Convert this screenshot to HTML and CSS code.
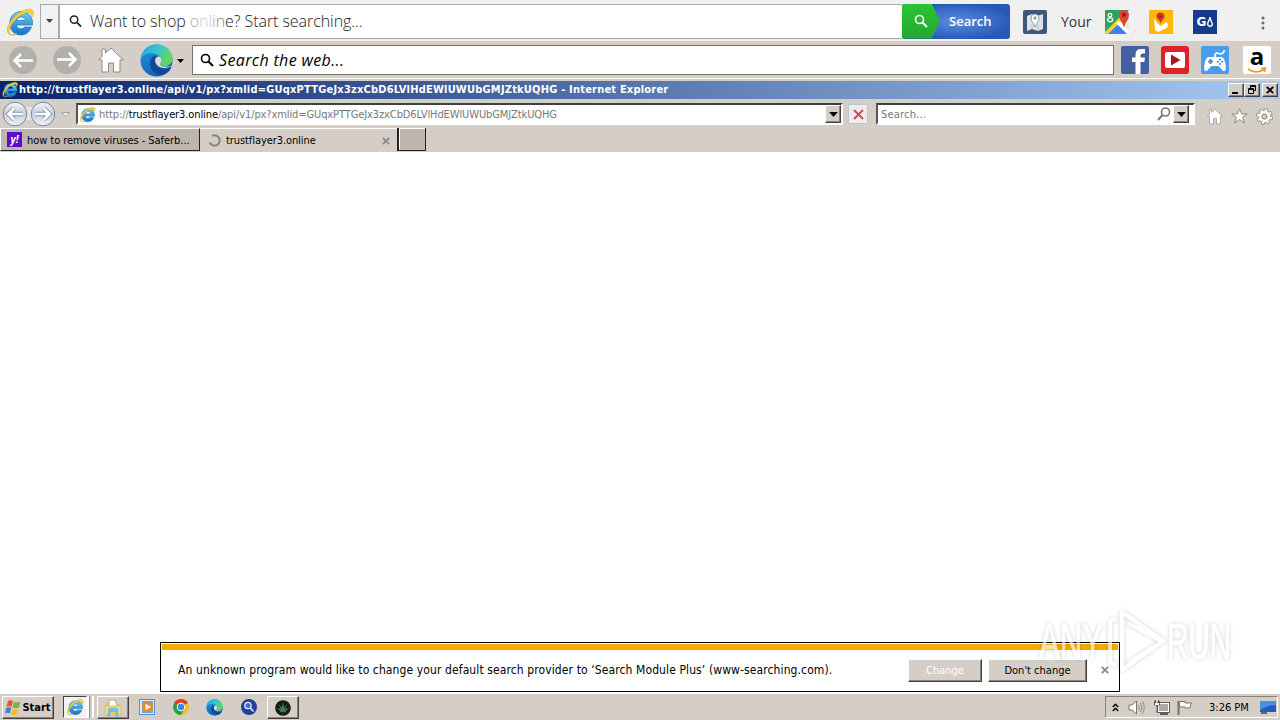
FILE: index.html
```html
<!DOCTYPE html>
<html lang="en">
<head>
<meta charset="utf-8">
<title>Internet Explorer</title>
<link rel="stylesheet" href="styles.css">
</head>
<body>
<svg class="defs" width="0" height="0">
  <defs>
    <linearGradient id="ieg" x1="0" y1="0" x2="0" y2="1"><stop offset="0" stop-color="#6ccdf5"/><stop offset="1" stop-color="#1470c4"/></linearGradient>
    <linearGradient id="edgetop" x1="0" y1="0" x2="1" y2=".5"><stop offset="0" stop-color="#1a9fe0"/><stop offset=".5" stop-color="#35c6d0"/><stop offset="1" stop-color="#62d660"/></linearGradient>
    <linearGradient id="edgelow" x1="0" y1="0" x2=".4" y2="1"><stop offset="0" stop-color="#1f9be6"/><stop offset="1" stop-color="#1462b4"/></linearGradient>
    <symbol id="ie" viewBox="0 0 30 30">
      <path d="M27.500 18H11.500C12 22 17 23 19.500 20H26.500C24.500 25.500 20.500 28 15.800 28 8.500 28 4.800 22.500 4.800 16 4.800 9.500 9.500 4.500 16 4.500 23.500 4.500 28.200 10 27.500 18ZM11.500 13.500H20.500C20 8.700 12.500 8.700 11.500 13.500Z" fill="url(#ieg)" stroke="#1b7dc5" stroke-width=".7"/>
      <path d="M4 27C-1 24 5 12 14 6 20 2 26 1 28 4 29 6 28 8 27 10 27 5 23 4 16 8 8 13 2 23 5 27 7 29 10 27 12 26 9 29 6 29 4 27Z" fill="#f6cf3c" stroke="#c8a02c" stroke-width=".5"/>
    </symbol>
    <symbol id="edge" viewBox="0 0 32 32">
      <circle cx="16" cy="16" r="15.500" fill="url(#edgelow)"/>
      <path d="M10 17C8 25 15 31 23 29.800 27 28 29 26 30.300 22.500 25 26 16 24 14.500 18 13.500 14 16 12 17 11.500 13 11 10.500 13.500 10 17Z" fill="#0f4a9a"/>
      <path d="M.6 14.500C2 6 8 .5 16 .5 25 .5 31.500 7 31.500 14 31.500 18.500 28 21.300 23.500 21.300 19.500 21.300 18.800 20 20 18.500 22.500 14.500 18.500 9 11.500 9 6.500 9 2.500 11 .6 14.500Z" fill="url(#edgetop)"/>
      <path d="M19.500 12.500C16 11 13.500 15.500 15.500 19 18 24 26 24.500 31 20.500 29 21.800 25 22 22 21.500 18.800 21 19 19.500 20 18.500 21.300 16.500 21 14 19.500 12.500Z" fill="#dedcd6"/>
    </symbol>
    <symbol id="mag" viewBox="0 0 14 14"><circle cx="5.500" cy="5.500" r="4" fill="none" stroke="currentColor" stroke-width="1.600"/><path d="M8.500 8.500L13 13" stroke="currentColor" stroke-width="2"/></symbol>
    <symbol id="house" viewBox="0 0 26 26"><path d="M13 1L7.500 6V2H4V9.500L.7 13H4V25H10.500V16H15.500V25H22V13H25.300Z" fill="#fff" stroke="#8d8983" stroke-width="1"/></symbol>
    <symbol id="dn" viewBox="0 0 7 4"><path d="M0 0H7L3.500 4Z" fill="currentColor"/></symbol>
    <symbol id="x" viewBox="0 0 8 8"><path d="M.8.8L7.200 7.200M7.200.8L.8 7.200" stroke="currentColor" stroke-width="1.900"/></symbol>
  </defs>
</svg>
<div class="desktop">
  <header class="bar shop">
    <svg class="shop-ie" width="30" height="30"><use href="#ie"/></svg>
    <button class="shop-drop"><svg width="7" height="6"><use href="#dn"/></svg></button>
    <div class="shop-input"><svg width="13" height="14"><use href="#mag"/></svg><span>Want to shop <i class="fade1">o</i><i class="fade2">nl</i><i class="fade1">i</i><i class="fade3">n</i>e? Start searching...</span></div>
    <button class="shop-btn"><span class="shop-arrow"><svg width="14" height="14"><use href="#mag"/></svg></span><span>Search</span></button>
    <svg class="ic-map" width="24" height="24" viewBox="0 0 24 24"><rect width="24" height="24" rx="2" fill="#3e5877"/><path d="M4 6L9 4 14 6 20 4V19L15 21 9 19 4 21Z" fill="#dfe3e6"/><path d="M9 14V19M15 14V21" stroke="#b5bec8"/><path d="M12 17C10 12 8 11 8 8A4 4 0 0 1 16 8C16 11 14 12 12 17Z" fill="#fff" stroke="#72889c" stroke-width=".8"/><circle cx="12" cy="8" r="1.700" fill="#8ba0b2"/></svg>
    <span class="your">Your</span>
    <svg class="ic-gmap" width="24" height="24" viewBox="0 0 24 24"><rect width="24" height="24" fill="#2fa25b"/><path d="M24 0V24H0Z" fill="#e7e7e4"/><path d="M0 24L12 12 24 24Z" fill="#3f83ea"/><path d="M0 22L16 6 19 9 3 24H0Z" fill="#f6ce36"/><path d="M11 13L22 24H24V21L14 11Z" fill="#fff"/><path d="M19 18C18 12 14 10 14 5A5 5 0 0 1 24 5C24 10 20 12 19 18Z" fill="#df4336"/><circle cx="19" cy="5" r="1.900" fill="#7d221b"/><circle cx="5" cy="5.200" r="1.800" fill="none" stroke="#fff" stroke-width="1.300"/><ellipse cx="5.200" cy="9.800" rx="2.500" ry="1.900" fill="none" stroke="#fff" stroke-width="1.300"/></svg>
    <svg class="ic-route" width="24" height="24" viewBox="0 0 24 24"><rect width="24" height="24" fill="#fdb80c"/><path d="M5 8L9 14 12 16 17 12 19 14 18 18 9 22 6 20Z" fill="#fff"/><path d="M12 14C11 10 7.500 9 7.500 6.500A4 4 0 0 1 15.500 6.500C15.500 9 12 10 12 14Z" fill="#cf3e1e"/><circle cx="11.500" cy="6.500" r="1.300" fill="#7c2413"/></svg>
    <span class="ic-gas">G<svg width="6" height="10" viewBox="0 0 6 10"><path d="M3 0C3 3 .7 4 .7 7A2.300 2.300 0 0 0 5.300 7C5.300 5 3 4 3 0Z" fill="none" stroke="#fff" stroke-width="1.400"/></svg></span>
    <svg class="dots" width="4" height="14" viewBox="0 0 4 14" fill="#6b6b6b"><circle cx="2" cy="2" r="1.500"/><circle cx="2" cy="7" r="1.500"/><circle cx="2" cy="12" r="1.500"/></svg>
  </header>

  <div class="bar web">
    <svg class="w-back" width="28" height="28" viewBox="0 0 28 28"><circle cx="14" cy="14" r="14" fill="#b2b0ad"/><path d="M24 14.500H6M12 8L5.500 14.500 12 21" fill="none" stroke="#fff" stroke-width="2.500"/></svg>
    <svg class="w-fwd" width="28" height="28" viewBox="0 0 28 28"><circle cx="14" cy="14" r="14" fill="#b2b0ad"/><path d="M4 13.500H22M16 7L22.500 13.500 16 20" fill="none" stroke="#fff" stroke-width="2.500"/></svg>
    <svg class="w-home" width="26" height="26"><use href="#house"/></svg>
    <svg class="w-edge" width="33" height="33"><use href="#edge"/></svg>
    <svg class="w-drop" width="7" height="4"><use href="#dn"/></svg>
    <div class="web-input"><svg width="14" height="14"><use href="#mag" stroke="#000" stroke-width=".4"/></svg><span>Search the web...</span></div>
    <svg class="fb" width="28" height="28" viewBox="0 0 28 28"><rect width="28" height="28" rx="2" fill="#4360a0"/><path d="M14.500 28V16H11V11.500H14.500V8.500Q14.500 3 20 3H24V7.500H21.500Q19.500 7.500 19.500 9.500V11.500H24L23.300 16H19.500V28Z" fill="#fff"/></svg>
    <svg class="yt" width="28" height="28" viewBox="0 0 28 28"><rect width="28" height="28" rx="3" fill="#de2327"/><rect x="4" y="6" width="20" height="16" rx="2" fill="#fff"/><path d="M10 8.500L19.500 14 10 19.500Z" fill="#b0141a"/></svg>
    <svg class="game" width="28" height="28" viewBox="0 0 28 28"><rect width="28" height="28" rx="2" fill="#4a9cee"/><path d="M14 11V9Q15 6 18 7.500 22 9 23.500 4" fill="none" stroke="#fff" stroke-width="1.700"/><path d="M7 11H21C24 12 26 23 24 25 21 26 19 20 17 20H11C9 20 7 26 4 25 2 23 4 12 7 11Z" fill="#fff"/><path d="M7 15.500H12M9.500 13V18" stroke="#3c7cc6" stroke-width="1.700"/><circle cx="19" cy="13.500" r="1" fill="#3c7cc6"/><circle cx="19" cy="18" r="1" fill="#3c7cc6"/><circle cx="16.800" cy="15.700" r="1" fill="#3c7cc6"/><circle cx="21.200" cy="15.700" r="1" fill="#3c7cc6"/></svg>
    <div class="amazon"><span>a</span><svg width="20" height="7" viewBox="0 0 20 7"><path d="M1 2Q9 8 18 2M14 1.500L18.500 1 17.500 5" fill="none" stroke="#f29b28" stroke-width="1.600"/></svg></div>
  </div>

  <div class="bar title">
    <svg width="18" height="17"><use href="#ie"/></svg>
    <span class="title-text">http://trustflayer3.online/api/v1/px?xmlid=GUqxPTTGeJx3zxCbD6LVlHdEWlUWUbGMJZtkUQHG - Internet Explorer</span>
    <div class="winbtns">
      <button class="raised"><svg width="10" height="9"><rect x="1" y="7" width="6" height="2"/></svg></button>
      <button class="raised"><svg width="10" height="9" viewBox="0 0 10 9" fill="none" stroke="#000"><path d="M3.500 3V.5H8.500V5.500H6.500M3.500 1.500H8.500M1.500 3.500H6.500V8.500H1.500ZM1.500 4.500H6.500"/></svg></button>
      <button class="raised gap"><svg width="8" height="8"><use href="#x"/></svg></button>
    </div>
  </div>

  <div class="bar nav">
    <svg class="orbs" width="54" height="27" viewBox="0 0 54 27"><defs><linearGradient id="orb" x1="0" y1="0" x2="0" y2="1"><stop offset="0" stop-color="#f4f6fa"/><stop offset=".5" stop-color="#c4cedd"/><stop offset="1" stop-color="#f2f6fa"/></linearGradient></defs><rect x="10" y="6" width="34" height="13" fill="#e5e5e5"/><g fill="url(#orb)" stroke="#78879a"><circle cx="13" cy="13" r="11.800"/><circle cx="41" cy="13" r="11.800"/></g><path d="M21 13H7M12 7.500L6.500 13 12 18.500M33 13H47M42 7.500L47.500 13 42 18.500" fill="none" stroke="#8694a8" stroke-width="4.500"/><path d="M21 13H7M12 7.500L6.500 13 12 18.500M33 13H47M42 7.500L47.500 13 42 18.500" fill="none" stroke="#fff" stroke-width="2.700"/></svg>
    <svg class="nav-drop" width="9" height="5" viewBox="0 0 9 5"><path d="M.5.500H8.500L4.500 4.500Z" fill="#eee" stroke="#a39f99"/></svg>
    <div class="sunken addr"><svg width="17" height="17"><use href="#ie"/></svg><span class="url">http://<b>trustflayer3.online</b>/api/v1/px?xmlid=GUqxPTTGeJx3zxCbD6LVlHdEWlUWUbGMJZtkUQHG</span><button class="raised combo"><svg width="9" height="5"><use href="#dn"/></svg></button></div>
    <button class="stop"><svg width="11" height="11" viewBox="0 0 11 11"><path d="M1 1L10 10M10 1L1 10" stroke="#c94a4e" stroke-width="1.800"/></svg></button>
    <div class="sunken find"><span>Search...</span><svg width="14" height="14" viewBox="0 0 14 14"><circle cx="8.500" cy="5" r="4" fill="none" stroke="#777" stroke-width="1.600"/><path d="M5.500 8L1 13" stroke="#777" stroke-width="2"/></svg><button class="raised combo"><svg width="9" height="5"><use href="#dn"/></svg></button></div>
    <svg class="n-home" width="16" height="17"><use href="#house"/></svg>
    <svg class="n-star" width="17" height="16" viewBox="0 0 17 16"><path d="M8.500.800L10.600 6H16.200L11.700 9.300 13.500 15 8.500 11.500 3.500 15 5.300 9.300.8 6H6.400Z" fill="#fff" stroke="#8d8983"/></svg>
    <svg class="n-gear" width="17" height="17" viewBox="0 0 17 17"><circle cx="8.500" cy="8.500" r="6.700" fill="none" stroke="#858179" stroke-width="3.400" stroke-dasharray="3.200 2.062"/><circle cx="8.500" cy="8.500" r="6.200" fill="#fff" stroke="#858179" stroke-width=".8"/><circle cx="8.500" cy="8.500" r="6.700" fill="none" stroke="#fff" stroke-width="2" stroke-dasharray="2 3.262" stroke-dashoffset="-.6"/><circle cx="8.500" cy="8.500" r="2.600" fill="#d5cec6" stroke="#858179"/></svg>
  </div>

  <div class="bar tabs">
    <div class="tab back-tab"><span class="yahoo">y!</span><span>how to remove viruses - Saferb...</span></div>
    <div class="tab cur-tab"><svg width="13" height="13" viewBox="0 0 13 13"><path d="M4 1.800A5.200 5.200 0 1 1 1.700 8.500" fill="none" stroke="#858585" stroke-width="2"/></svg><span>trustflayer3.online</span><svg class="tx" width="8" height="8"><use href="#x"/></svg></div>
    <div class="tab new-tab"></div>
  </div>

  <main class="page">
    <div class="notice">
      <div class="stripe"></div>
      <div class="notice-row"><span class="msg">An unknown program would like to change your default search provider to ‘Search Module Plus’ (www-searching.com).</span><button class="raised change">Change</button><button class="raised dont">Don't change</button><svg class="nx" width="8" height="8"><use href="#x"/></svg></div>
    </div>
  </main>

  <footer class="bar task">
    <button class="raised start"><svg width="17" height="17" viewBox="0 0 17 17"><path d="M3 2Q5.500.5 8 2.200L6.500 8Q4 6.500 1.500 8Z" fill="#e5572c"/><path d="M9 2.800Q12 4 15.500 2.500L14 8.500Q11 10 7.500 8.500Z" fill="#77b843"/><path d="M1.200 9Q4 7.500 6.200 9L4.800 14.500Q2.500 13 0 14.500Z" fill="#3c83cf"/><path d="M7.200 9.500Q10.500 11 13.700 9.500L12 15.500Q9 16.800 5.700 15.200Z" fill="#f7bd35"/></svg><span>Start</span></button>
    <div class="task-ie"><svg width="18" height="18"><use href="#ie"/></svg></div><div class="stack"></div>
    <div class="raised task-btn files"><svg width="18" height="18" viewBox="0 0 18 18"><path d="M2 3H7L8 5H16V16H2Z" fill="#e8c765"/><path d="M5 1H11L13 6V12H5Z" fill="#fff" stroke="#a8b58b"/><path d="M1 7H17V16H13V12H5V16H1Z" fill="#f6df91" stroke="#cdad52" stroke-width=".6"/><path d="M4 17V11Q4 9 6 9H12Q14 9 14 11V17H12V12H6V17Z" fill="#79c4e9" stroke="#5ea5ca" stroke-width=".5"/></svg></div>
    <svg class="wmp" width="16" height="16" viewBox="0 0 16 16"><rect x=".5" y=".5" width="15" height="15" fill="#d9eafa" stroke="#4c94d8"/><rect x="3" y="2" width="11" height="12" fill="#66a5df"/><circle cx="8.500" cy="8" r="5.500" fill="#f4871f"/><path d="M6.500 4.800L12 8 6.500 11.200Z" fill="#fff"/></svg>
    <svg class="chrome" width="16" height="16" viewBox="0 0 16 16"><circle cx="8" cy="8" r="8" fill="#f8c21c"/><path d="M8 8L1.100 4A8 8 0 0 1 14.900 4Z" fill="#e23b2e"/><path d="M8 8L1.100 4A8 8 0 0 0 8 16L11.500 10Z" fill="#2a9d4d"/><circle cx="8" cy="8" r="4.200" fill="#fff"/><circle cx="8" cy="8" r="3.200" fill="#3f7fea"/></svg>
    <svg class="t-edge" width="17" height="17"><use href="#edge"/></svg>
    <svg class="ball" width="16" height="16" viewBox="0 0 16 16"><circle cx="8" cy="8" r="8" fill="#213e9c"/><circle cx="7" cy="6.500" r="3.200" fill="#4b6bbd" stroke="#e3e9ff" stroke-width="1.300"/><path d="M9.300 9L12.500 12.500" stroke="#e3e9ff" stroke-width="1.700"/></svg>
    <div class="raised task-btn leaf"><svg width="16" height="16" viewBox="0 0 16 16"><circle cx="8" cy="8" r="7.800" fill="#111a15"/><path d="M8 1.500L9.200 8 12.500 3.500 10.300 9 14.500 8 10.500 11 12 12.500 8.400 11.700V14H7.600V11.700L4 12.500 5.500 11 1.500 8 5.700 9 3.500 3.500 6.800 8Z" fill="#477c4b"/></svg></div>
    <div class="tray">
      <svg class="chev" width="7" height="9" viewBox="0 0 7 9"><path d="M.8 4L3.500 1.300 6.200 4M.8 8L3.500 5.300 6.200 8" fill="none" stroke="#000" stroke-width="1.500"/></svg>
      <svg class="vol" width="17" height="15" viewBox="0 0 17 15"><path d="M1 5H4L8.500 1V14L4 10H1Z" fill="#fff" stroke="#77736e"/><path d="M10.500 5Q12 7.500 10.500 10M12.500 3Q15 7.500 12.500 12M14.500 1.500Q18 7.500 14.500 13.500" fill="none" stroke="#8b8782"/></svg>
      <svg class="net" width="17" height="15" viewBox="0 0 17 15"><rect x="5.500" y="3.500" width="10" height="8" fill="#aaa" stroke="#fff"/><rect x="4.500" y="2.500" width="12" height="10" fill="none" stroke="#625e59"/><path d="M7 14H15" stroke="#625e59" stroke-width="2"/><path d="M1.500 1V5H6.500V1M2.500 0V3M5.500 0V3M4 5V12.500H8" fill="none" stroke="#5b5752"/><path d="M2 3H6V5H2Z" fill="#fff"/></svg>
      <svg class="flag" width="16" height="15" viewBox="0 0 16 15"><path d="M1.500 1V15" stroke="#77736e" stroke-width="2"/><path d="M2.500 1.500H8V3H15Q13 4 13 8H8V7H2.500Z" fill="#fff" stroke="#77736e"/></svg>
      <span class="time">3:26 PM</span>
      <svg class="mon" width="16" height="13" viewBox="0 0 16 13"><rect width="16" height="11" fill="#1e5cbe"/><path d="M0 0H16V4Q7 4 0 9Z" fill="#4b8fe0"/><path d="M1 12H7" stroke="#314968" stroke-width="1.500"/></svg>
    </div>
  </footer>

  <svg class="watermark" width="220" height="76" viewBox="0 0 220 76">
    <g class="wm">
      <text x="5" y="54" textLength="64" lengthAdjust="spacingAndGlyphs">ANY</text>
      <text x="133" y="54" textLength="64" lengthAdjust="spacingAndGlyphs">RUN</text>
      <path d="M88 7V65L129 36Z M94 18L129 37M95 58L121 41M82 13L76 17V57L82 61"/>
    </g>
  </svg>
</div>
</body>
</html>
```
FILE: styles.css
```css
* { box-sizing: border-box; }
body { margin: 0; background: #fff; color: #000; font: 11px "DejaVu Sans Condensed", "DejaVu Sans", sans-serif; font-stretch: condensed; }
button { margin: 0; padding: 0; border: 0; color: inherit; font: inherit; font-stretch: inherit; }
svg { display: block; flex: none; }
span { white-space: nowrap; }
.defs { position: absolute; }
.desktop { position: relative; width: 1280px; height: 720px; display: flex; flex-direction: column; overflow: hidden; }
.bar { display: flex; flex: none; background: #d5cec6; }
.raised { display: flex; align-items: center; justify-content: center; background: #d5cec6; border: 1px solid; border-color: #fff #404040 #404040 #fff; box-shadow: inset -1px -1px #87827c; }
.sunken { display: flex; background: #fff; border: 2px solid; border-color: #453e3b #fff #fff #5c5552; }

.shop { height: 41px; background: #f0f0f0; align-items: center; padding: 0 0 0 6px; }
.shop-ie { margin: 2px 1px 0 -1px; }
.shop-drop { display: flex; align-items: center; justify-content: center; width: 19px; height: 35px; margin: 1px 0 0 4px; background: #f2f2f2; border: 1px solid #aaa; color: #444; }
.shop-input { display: flex; align-items: center; width: 843px; height: 35px; margin-top: 1px; padding-left: 9px; background: #fff; border: 1px solid #aaa; border-right: 0; color: #222; font: 300 16px "Open Sans", sans-serif; }
.shop-input span { margin-left: 8px; letter-spacing: -.06px; }
.shop-input i { font-style: normal; }
.fade1 { color: #aaa; }
.fade2 { color: #ccc; }
.fade3 { color: #888; }
.shop-btn { display: flex; width: 108px; height: 35px; margin-top: 1px; border-radius: 3px; overflow: hidden; background: radial-gradient(ellipse at 50% 50%, #5b8ce0, #2658b8 75%); color: #fff; font: 600 13px/35px "Open Sans", sans-serif; }
.shop-arrow { display: flex; align-items: center; width: 38px; height: 35px; margin-right: 9px; padding-left: 12px; background: linear-gradient(#2cc337, #23a82c); clip-path: polygon(0 0, 78% 0, 100% 50%, 78% 100%, 0 100%); }
.ic-map { margin: 3px 0 0 13px; }
.your { width: 30px; margin: 1px 14px 0; color: #333; font: 14px "Open Sans", sans-serif; }
.ic-gmap { margin-top: 3px; }
.ic-route { margin: 3px 20px 0; }
.ic-gas { display: flex; align-items: center; justify-content: center; gap: 1px; width: 24px; height: 24px; margin-top: 3px; background: #143c8c; color: #fff; font: 700 12px "DejaVu Sans", sans-serif; }
.dots { margin: 5px 0 0 44px; }

.web { height: 37px; align-items: center; padding-left: 9px; }
.w-fwd { margin-left: 16px; }
.w-home { margin: 1px 0 0 17px; }
.w-edge { margin: 1px 0 0 16px; }
.w-drop { margin: 3px 0 0 4px; }
.web-input { display: flex; align-items: center; width: 922px; height: 30px; margin: 1px 7px 0 8px; padding-left: 7px; background: #fff; border: 1px solid #77736f; font: italic 16px "Open Sans", sans-serif; }
.web-input span { margin-left: 5px; letter-spacing: .35px; }
.yt, .game { margin-left: 12px; }
.amazon { display: flex; flex-direction: column; align-items: center; width: 28px; height: 28px; margin-left: 14px; background: #fff; border-radius: 2px; font: 700 24px/20px "Open Sans", sans-serif; }
.amazon span { height: 21px; }

.title { height: 22px; padding: 0 2px; align-items: center; background: linear-gradient(90deg, #0a246a, #a6caf0) 0 2px / 100% 18px no-repeat #d5cec6; border-top: 1px solid #fff; color: #fff; }
.title > svg { margin-left: -1px; }
.title-text { width: 1210px; font-weight: 700; letter-spacing: .2px; }
.winbtns { display: flex; color: #000; }
.winbtns .raised { width: 16px; height: 14px; }
.winbtns .gap { margin-left: 2px; }

.nav { height: 28px; align-items: flex-start; padding-left: 2px; }
.orbs { margin-top: 1px; }
.nav-drop { margin: 12px 6px 0 5px; }
.addr { width: 767px; height: 22px; margin-top: 3px; align-items: center; }
.addr > svg { margin-left: 1px; }
.url { width: 727px; margin-left: 3px; color: #777; letter-spacing: -.1px; }
.url b { color: #000; font-weight: 400; }
.combo { width: 16px; height: 18px; }
.stop { display: flex; align-items: center; justify-content: center; width: 20px; height: 20px; margin: 4px 8px 0 5px; background: #eeecee; border: 1px solid #c1c5cc; }
.find { width: 319px; height: 22px; margin-top: 3px; align-items: center; color: #777; }
.find span { width: 275px; margin-left: 3px; letter-spacing: .2px; }
.find .combo { margin-left: 2px; color: #000; }
.find > svg { margin-left: 1px; }
.n-home { margin: 8px 0 0 12px; }
.n-star { margin: 8px 0 0 8px; }
.n-gear { margin: 8px 0 0 8px; }

.tabs { height: 24px; align-items: flex-start; }
.tab { display: flex; align-items: center; height: 24px; }
.back-tab { width: 200px; height: 23px; padding-left: 6px; background: #bdb5ae; border: 1px solid; border-color: #fff #222 #222 #fff; }
.back-tab span + span { letter-spacing: -.05px; padding-top: 2px; }
.yahoo { width: 15px; height: 15px; margin-right: 5px; background: #5a0cc8; color: #fff; font: italic 700 10px/14px "Open Sans", sans-serif; text-align: center; }
.cur-tab { width: 197px; padding-left: 8px; border-top: 1px solid #fff; }
.cur-tab span { width: 156px; margin-left: 5px; letter-spacing: -.08px; }
.tx, .nx { color: #8e8b88; }
.new-tab { width: 29px; height: 23px; background: #bdb5ae; border: solid #222; border-width: 0 1px 1px 2px; box-shadow: inset 1px 1px #fff; }

.page { display: flex; flex: 1; align-items: flex-end; justify-content: center; padding-bottom: 1px; background: #fff; }
.notice { width: 960px; height: 50px; padding: 1px; border: 1px solid #000; }
.stripe { height: 6px; background: #f5ab00; }
.notice-row { display: flex; align-items: center; height: 40px; padding-left: 16px; }
.msg { width: 730px; font-size: 12px; letter-spacing: .107px; }
.change { width: 74px; height: 23px; color: #fff; }
.dont { width: 99px; height: 23px; margin: 0 14px 0 6px; }

.task { height: 27px; padding: 2px 2px 0; border-top: 1px solid #fff; }
.start { width: 52px; height: 23px; font-weight: 700; }
.start span { margin-left: 0; }
.task-ie { display: flex; align-items: center; justify-content: center; width: 24px; height: 22px; margin-left: 9px; background: #f4f1ee; border: 1px solid; border-color: #444 #fff #fff #444; }
.stack { width: 7px; height: 22px; border: solid #fff; border-width: 0 2px; box-shadow: inset 1px 0 #888; }
.task-btn { width: 32px; height: 23px; }
.files { margin-left: 3px; }
.wmp { margin: 3px 0 0 10px; }
.chrome { margin: 3px 0 0 18px; }
.t-edge { margin: 3px 0 0 17px; }
.ball { margin: 3px 0 0 18px; }
.leaf { margin-left: 10px; }
.tray { display: flex; align-items: center; width: 173px; height: 22px; margin-left: auto; padding-left: 6px; border: 1px solid; border-color: #87827c #fff #fff #87827c; }
.vol { margin-left: 9px; }
.net { margin-left: 8px; }
.flag { margin-left: 7px; }
.time { width: 40px; margin: 0 11px 0 16px; }

.watermark { position: absolute; left: 1034px; top: 605px; }
.wm { filter: drop-shadow(0 0 2px #0004); opacity: .65; }
.wm text { fill: #fff; stroke: #fff; stroke-width: 1; font: 50px "Liberation Sans", sans-serif; }
.wm path { fill: none; stroke: #fff; stroke-width: 4; stroke-linejoin: round; }
```
